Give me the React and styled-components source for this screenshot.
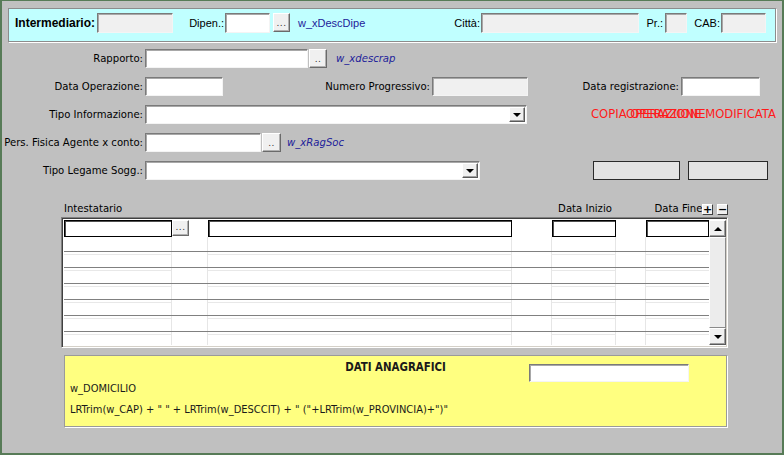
import React from 'react';
import styled, { createGlobalStyle } from 'styled-components';

const Global = createGlobalStyle`
  html, body { margin: 0; padding: 0; background: #c0c0c0; }
  * { box-sizing: border-box; }
`;

const Window = styled.div`
  width: 784px;
  height: 455px;
  background: #c0c0c0;
  border: 2px solid #577b57;
  border-top-width: 1px;
  display: flex;
  flex-direction: column;
  font-family: "DejaVu Sans", Verdana, sans-serif;
  font-size: 10.1px;
  color: #000;
  overflow: hidden;
`;

/* ---------- header ---------- */
const Header = styled.div`
  margin: 7px 0 0 6px;
  width: 768px;
  height: 34px;
  flex: none;
  background: #c0ffff;
  border: 1px solid #8c8c8c;
  box-shadow: 1px 1px 0 #fff;
  display: flex;
  align-items: flex-start;
  padding-top: 4px;
  font-family: "Liberation Sans", Arial, sans-serif;
  font-size: 11px;
`;

const HLabel = styled.div`
  width: ${p => p.w}px;
  height: 20px;
  line-height: 20px;
  text-align: right;
  padding-right: ${p => p.pr ?? 1}px;
  font-weight: ${p => (p.bold ? 700 : 400)};
  font-size: ${p => (p.bold ? 12 : 11)}px;
  white-space: nowrap;
  flex: none;
`;

const HLink = styled.div`
  width: ${p => p.w}px;
  height: 20px;
  line-height: 20px;
  padding-left: 8px;
  color: #22229a;
  white-space: nowrap;
  flex: none;
`;

/* ---------- generic controls ---------- */
const Field = styled.div`
  width: ${p => p.w}px;
  height: ${p => p.h ?? 19}px;
  flex: none;
  background: ${p => (p.disabled ? '#f0f0f0' : '#fff')};
  border: 1px solid;
  border-color: #7a7a7a #f4f4f4 #f4f4f4 #7a7a7a;
  box-shadow: inset 1px 1px 0 #a8a8a8;
`;

const SelectBox = styled(Field)`
  display: flex;
  justify-content: flex-end;
  padding: 1px;
`;

const ArrowBtn = styled.div`
  width: 16px;
  height: 100%;
  background: #f0f0f0;
  border: 1px solid;
  border-color: #fff #5a5a5a #5a5a5a #fff;
  box-shadow: inset -1px -1px 0 #a0a0a0;
  display: flex;
  align-items: center;
  justify-content: center;
  flex: none;
`;

const Tri = styled.span`
  width: 0;
  height: 0;
  border-left: 4px solid transparent;
  border-right: 4px solid transparent;
  ${p => (p.up ? 'border-bottom: 4px solid #000;' : 'border-top: 4px solid #000;')}
`;

const Dots = styled.div`
  width: ${p => p.w}px;
  height: ${p => p.h ?? 19}px;
  margin-left: ${p => p.ml ?? 0}px;
  flex: none;
  background: #f0f0f0;
  border: 1px solid;
  border-color: #fff #6a6a6a #6a6a6a #fff;
  box-shadow: inset -1px -1px 0 #b0b0b0;
  font-family: "DejaVu Sans", sans-serif;
  font-size: 9px;
  line-height: 1;
  color: #333;
  display: flex;
  align-items: flex-end;
  justify-content: center;
  padding-bottom: 3px;
  letter-spacing: 0.5px;
`;

/* ---------- form ---------- */
const Form = styled.div`
  display: flex;
  flex-direction: column;
  gap: 9px;
  margin-top: 7px;
  flex: none;
`;

const Row = styled.div`
  display: flex;
  align-items: center;
  height: 19px;
  position: relative;
`;

const Label = styled.div`
  width: ${p => p.w ?? 143}px;
  flex: none;
  text-align: right;
  padding-right: 2px;
  white-space: nowrap;
`;

const Link = styled.div`
  margin-left: ${p => p.ml}px;
  color: #22229a;
  font-style: italic;
  white-space: nowrap;
`;

const GreyBox = styled.div`
  width: ${p => p.w}px;
  height: 19px;
  margin-left: ${p => p.ml}px;
  flex: none;
  background: #e3e3e3;
  border: 1px solid #2a2a2a;
`;

const Status = styled.div`
  position: absolute;
  top: 0;
  left: 589px;
  width: 186px;
  height: 19px;
  color: #ff1a1a;
  font-size: 11.6px;
  line-height: 19px;
  white-space: nowrap;
`;

const StatusText = styled.span`
  position: absolute;
  top: 0;
  left: ${p => p.x}px;
`;

/* ---------- grid ---------- */
const COLS = [108, 36, 304, 40, 64, 30, 63];
const INPUT_COLS = [true, false, true, false, true, false, true];

const GridArea = styled.div`
  margin: 21px 0 0 59px;
  width: 667px;
  flex: none;
`;

const GridHead = styled.div`
  display: flex;
  height: 16px;
  line-height: 16px;
  padding-left: 3px;
  position: relative;
`;

const HeadCell = styled.div`
  width: ${p => p.w}px;
  flex: none;
  text-align: ${p => p.align || 'center'};
  white-space: nowrap;
  margin-left: ${p => p.ml ?? 0}px;
`;

const PlusMinus = styled.div`
  position: absolute;
  left: 641px;
  top: 3px;
  display: flex;
  gap: 4px;
`;

const TinyBtn = styled.div`
  width: 11px;
  height: 11px;
  background: #f0f0f0;
  border: 1px solid;
  border-color: #fff #404040 #404040 #fff;
  display: flex;
  align-items: center;
  justify-content: center;
  font-family: "DejaVu Sans", sans-serif;
  font-weight: 700;
  font-size: 11px;
  line-height: 1;
`;

const Grid = styled.div`
  width: 667px;
  height: 131px;
  border: 1px solid;
  border-color: #808080 #fff #fff #808080;
  box-shadow: inset 1px 1px 0 #404040, inset -1px -1px 0 #d4d0c8;
  background: #fff;
  padding: 2px;
  display: flex;
`;

const Rows = styled.div`
  width: 645px;
  flex: none;
  overflow: hidden;
  display: flex;
  flex-direction: column;
`;

const GridRow = styled.div`
  display: flex;
  flex: none;
  height: ${p => p.h}px;
  ${p => (p.ruled ? 'border-top: 1px solid #808080;' : '')}
`;

const Cell = styled.div`
  width: ${p => p.w}px;
  flex: none;
  display: flex;
  align-items: stretch;
  ${p => (p.sep ? 'border-right: 1px solid #e6e6e6;' : '')}
  ${p =>
    p.line
      ? 'background: linear-gradient(#fff 0 2px, #e8e8e8 2px 3px, #fff 3px);'
      : 'background: #fff;'}
`;

const CellInput = styled.div`
  width: 100%;
  height: 100%;
  background: #fff;
  border: 1px solid #000;
  box-shadow: inset 1px 1px 0 #505050;
`;

const Scroll = styled.div`
  width: 17px;
  flex: none;
  display: flex;
  flex-direction: column;
  background: #f0f0f0;
`;

const ScrollBtn = styled.div`
  height: 17px;
  flex: none;
  background: #f0f0f0;
  border: 1px solid;
  border-color: #fff #5a5a5a #5a5a5a #fff;
  box-shadow: inset -1px -1px 0 #a0a0a0;
  display: flex;
  align-items: center;
  justify-content: center;
`;

const Thumb = styled.div`
  flex: 1;
  background: #ececec;
  border: 1px solid;
  border-color: #fff #8a8a8a #8a8a8a #fff;
`;

/* ---------- yellow panel ---------- */
const Yellow = styled.div`
  margin: 7px 0 0 62px;
  width: 663px;
  height: 72px;
  flex: none;
  background: #ffff80;
  border: 1px solid #9a9a9a;
  box-shadow: 1px 1px 0 #fff;
  font-family: "DejaVu Sans Condensed", "DejaVu Sans", sans-serif;
  font-size: 11px;
  color: #1a1a1a;
  padding: 8px 0 0 5px;
`;

const TitleRow = styled.div`
  display: grid;
  grid-template-columns: 1fr auto 1fr;
  height: 18px;
  margin-left: -5px;
`;

const Title = styled.div`
  font-weight: 700;
  font-size: 11.4px;
  line-height: 12px;
  margin-top: -3px;
  grid-column: 2;
`;

const TitleInput = styled(Field)`
  margin-left: 83px;
`;

const YText = styled.div`
  line-height: 14px;
  margin-top: ${p => p.mt ?? 0}px;
  white-space: nowrap;
`;

function BodyRow({ ruled, h }) {
  return (
    <GridRow ruled={ruled} h={h}>
      {COLS.map((w, i) => (
        <Cell key={i} w={w} sep={i < COLS.length - 1} line={ruled && INPUT_COLS[i]} />
      ))}
    </GridRow>
  );
}

export default function App() {
  return (
    <>
      <Global />
      <Window>
        <Header>
          <HLabel w={88} pr={2} bold>Intermediario:</HLabel>
          <Field w={76} h={20} disabled />
          <HLabel w={52}>Dipen.:</HLabel>
          <Field w={45} h={20} />
          <Dots w={17} h={19} ml={3}>...</Dots>
          <HLink w={129}>w_xDescDipe</HLink>
          <HLabel w={62}>Città:</HLabel>
          <Field w={158} h={20} disabled />
          <HLabel w={26} pr={2}>Pr.:</HLabel>
          <Field w={22} h={20} disabled />
          <HLabel w={34}>CAB:</HLabel>
          <Field w={45} h={20} disabled />
        </Header>

        <Form>
          <Row>
            <Label>Rapporto:</Label>
            <Field w={163} />
            <Dots w={18} ml={1}>..</Dots>
            <Link ml={9}>w_xdescrap</Link>
          </Row>
          <Row>
            <Label>Data Operazione:</Label>
            <Field w={78} />
            <Label w={209}>Numero Progressivo:</Label>
            <Field w={96} disabled />
            <Label w={153}>Data registrazione:</Label>
            <Field w={79} />
          </Row>
          <Row>
            <Label>Tipo Informazione:</Label>
            <SelectBox w={382}>
              <ArrowBtn><Tri /></ArrowBtn>
            </SelectBox>
            <Status>
              <StatusText x={0}>COPIA OPERAZIONE</StatusText>
              <StatusText x={35}>OPERAZIONE MODIFICATA</StatusText>
            </Status>
          </Row>
          <Row>
            <Label>Pers. Fisica Agente x conto:</Label>
            <Field w={116} />
            <Dots w={19} ml={1}>..</Dots>
            <Link ml={6}>w_xRagSoc</Link>
          </Row>
          <Row>
            <Label>Tipo Legame Sogg.:</Label>
            <SelectBox w={335}>
              <ArrowBtn><Tri /></ArrowBtn>
            </SelectBox>
            <GreyBox w={87} ml={113} />
            <GreyBox w={80} ml={8} />
          </Row>
        </Form>

        <GridArea>
          <GridHead>
            <HeadCell w={488} align="left">Intestatario</HeadCell>
            <HeadCell w={64} ml={1}>Data Inizio</HeadCell>
            <HeadCell w={30} />
            <HeadCell w={63}>Data Fine</HeadCell>
            <PlusMinus>
              <TinyBtn>+</TinyBtn>
              <TinyBtn>−</TinyBtn>
            </PlusMinus>
          </GridHead>
          <Grid>
            <Rows>
              <GridRow h={17}>
                <Cell w={108}><CellInput /></Cell>
                <Cell w={36}><Dots w={17} h={16}>...</Dots></Cell>
                <Cell w={304}><CellInput /></Cell>
                <Cell w={40} />
                <Cell w={64}><CellInput /></Cell>
                <Cell w={30} />
                <Cell w={63}><CellInput /></Cell>
              </GridRow>
              <BodyRow h={14} />
              {[0, 1, 2, 3, 4, 5].map(i => (
                <BodyRow key={i} ruled h={16} />
              ))}
            </Rows>
            <Scroll>
              <ScrollBtn><Tri up /></ScrollBtn>
              <Thumb />
              <ScrollBtn><Tri /></ScrollBtn>
            </Scroll>
          </Grid>
        </GridArea>

        <Yellow>
          <TitleRow>
            <Title>DATI ANAGRAFICI</Title>
            <TitleInput w={160} h={18} />
          </TitleRow>
          <YText>w_DOMICILIO</YText>
          <YText mt={7}>LRTrim(w_CAP) + " " + LRTrim(w_DESCCIT) + " ("+LRTrim(w_PROVINCIA)+")"</YText>
        </Yellow>
      </Window>
    </>
  );
}
